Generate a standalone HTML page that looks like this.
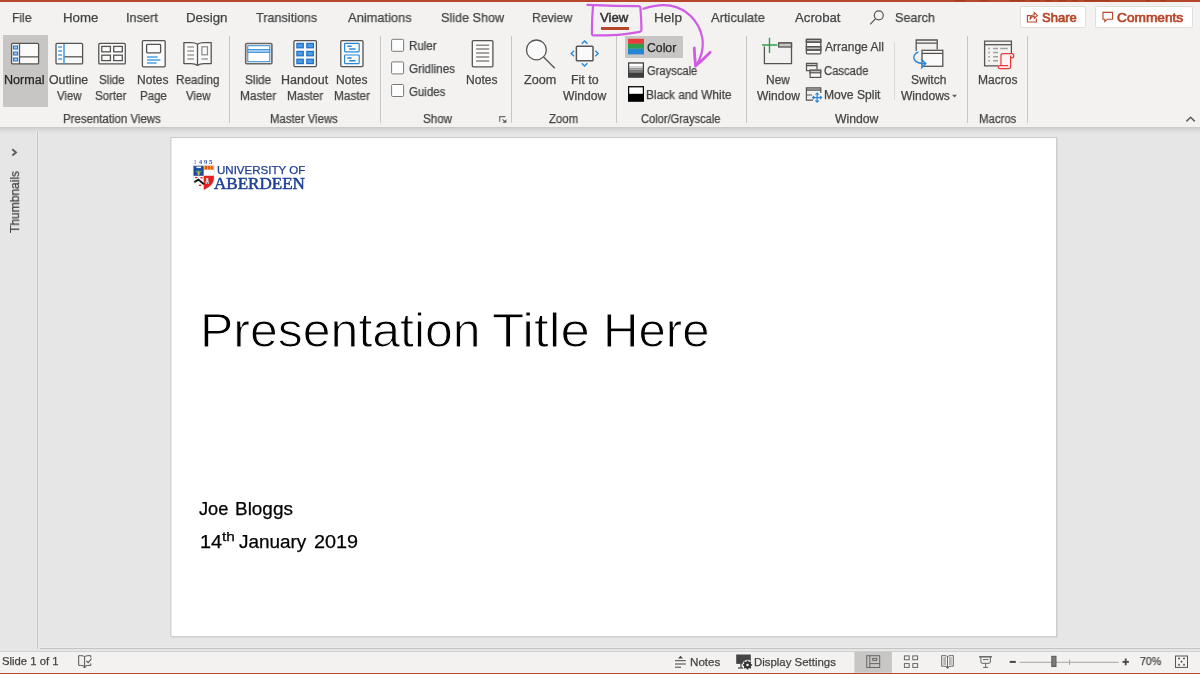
<!DOCTYPE html>
<html lang="en">
<head>
<meta charset="utf-8">
<title>PowerPoint – View tab – Color/Grayscale</title>
<style>
html,body{margin:0;padding:0}
body{width:1200px;height:674px;position:relative;overflow:hidden;background:#e6e6e6;font-family:"Liberation Sans",sans-serif;color:#444}
.t{position:absolute;white-space:nowrap;line-height:1;transform-origin:0 0;color:#444;will-change:transform;-webkit-text-stroke:.25px}
.abs,svg{position:absolute}
svg{overflow:visible}
#titlebar{left:0;top:0;width:1200px;height:2px;background:#b7472a}
#ribbon{left:0;top:2px;width:1200px;height:125px;background:#f3f2f1}
#rshadow{left:0;top:127px;width:1200px;height:8px;background:linear-gradient(#c9c7c5,#d4d3d2 22%,#dedede 50%,#e4e4e4 78%,#e6e6e6)}
.sep{position:absolute;top:36px;width:1px;height:87px;background:#c8c6c4}
.sel{position:absolute;background:#c8c6c4}
.cb{position:absolute;left:391.5px;width:11px;height:11px;border:1px solid #666;background:#fff}
.btn{position:absolute;top:5.5px;height:20.5px;background:#fff;border:1px solid #e1dfdd;border-radius:2px}
#thumbs{left:0;top:130px;width:36px;height:519px;border-right:1px solid #ececec}
#vline{left:37px;top:130px;width:1px;height:519px;background:#c4c4c4;border-right:1px solid #ececec}
#slide{left:0;top:0;width:1200px;height:674px}
#status{left:0;top:651px;width:1200px;height:21.5px;background:#f3f2f1;border-top:1px solid #d2d2d2}
#hline{left:39.5px;top:647px;width:1161px;height:1px;background:#c4c4c4;border-top:1px solid #ececec}
#bottombar{left:0;top:672.5px;width:1200px;height:1.5px;background:#b7472a}
</style>
</head>
<body>
<div id="titlebar" class="abs"><svg width="1200" height="2" style="left:0;top:0"><rect x="955" y="0" width="10" height="1.4" fill="#a23c23"/><rect x="980" y="0" width="8" height="1.4" fill="#a23c23"/><rect x="1010" y="0" width="15" height="1.4" fill="#a23c23"/><rect x="1030" y="0" width="10" height="1.4" fill="#a23c23"/><rect x="1045" y="0" width="7" height="1.4" fill="#a23c23"/><rect x="1058" y="0" width="8" height="1.4" fill="#a23c23"/><rect x="1072" y="0" width="6" height="1.4" fill="#a23c23"/><rect x="1084" y="0" width="26" height="1.4" fill="#a23c23"/><rect x="1146" y="0" width="4" height="1.4" fill="#a23c23"/><rect x="1160" y="0" width="6" height="1.4" fill="#a23c23"/></svg></div>
<div id="ribbon" class="abs"></div>
<div id="rshadow" class="abs"></div>
<span class="t" style="left:11.51px;top:10.99px;font-size:13px;transform:scaleX(0.9325);">File</span>
<span class="t" style="left:62.66px;top:10.99px;font-size:13px;transform:scaleX(1.0217);">Home</span>
<span class="t" style="left:126.33px;top:10.99px;font-size:13px;transform:scaleX(0.9770);">Insert</span>
<span class="t" style="left:186.41px;top:10.99px;font-size:13px;transform:scaleX(1.0245);">Design</span>
<span class="t" style="left:255.97px;top:10.99px;font-size:13px;transform:scaleX(0.9706);">Transitions</span>
<span class="t" style="left:347.97px;top:10.99px;font-size:13px;transform:scaleX(0.9912);">Animations</span>
<span class="t" style="left:441.43px;top:10.99px;font-size:13px;transform:scaleX(0.9693);">Slide Show</span>
<span class="t" style="left:532.24px;top:10.99px;font-size:13px;transform:scaleX(0.9437);">Review</span>
<span class="t" style="left:653.89px;top:10.99px;font-size:13px;transform:scaleX(1.0448);">Help</span>
<span class="t" style="left:711.22px;top:10.99px;font-size:13px;transform:scaleX(0.9937);">Articulate</span>
<span class="t" style="left:794.97px;top:10.99px;font-size:13px;transform:scaleX(1.0161);">Acrobat</span>
<span class="t" style="left:895.43px;top:10.99px;font-size:13px;transform:scaleX(0.9659);">Search</span>
<span class="t" style="left:600.44px;top:10.99px;font-size:13px;transform:scaleX(1.0119);color:#333;-webkit-text-stroke:.5px;">View</span>
<div class="abs" style="left:600.5px;top:27px;width:28.5px;height:3px;background:#b7472a"></div>
<div class="btn" style="left:1019.5px;width:64.5px"></div>
<div class="btn" style="left:1094.5px;width:96.5px"></div>
<span class="t" style="left:1041.91px;top:10.99px;font-size:13px;transform:scaleX(0.9993);color:#b7472a;-webkit-text-stroke:.7px;">Share</span>
<span class="t" style="left:1117.30px;top:10.99px;font-size:13px;transform:scaleX(1.0532);color:#b7472a;-webkit-text-stroke:.7px;">Comments</span>
<div class="sel" style="left:3px;top:35px;width:44.5px;height:72px"></div>
<div class="sel" style="left:625px;top:36px;width:58px;height:22px"></div>
<div class="sep" style="left:229px"></div>
<div class="sep" style="left:379.5px"></div>
<div class="sep" style="left:510.5px"></div>
<div class="sep" style="left:616px"></div>
<div class="sep" style="left:745.5px"></div>
<div class="sep" style="left:967px"></div>
<div class="sep" style="left:1026.5px"></div>
<div class="sep" style="left:894px;top:42px;height:58px;background:#dcdad8"></div>
<span class="t" style="left:4.37px;top:73.84px;font-size:12px;transform:scaleX(1.0465);color:#262626;">Normal</span>
<span class="t" style="left:49.42px;top:73.84px;font-size:12px;transform:scaleX(1.0293);">Outline</span>
<span class="t" style="left:56.55px;top:89.84px;font-size:12px;transform:scaleX(0.9468);">View</span>
<span class="t" style="left:98.88px;top:73.84px;font-size:12px;transform:scaleX(0.9607);">Slide</span>
<span class="t" style="left:95.48px;top:89.84px;font-size:12px;transform:scaleX(0.9582);">Sorter</span>
<span class="t" style="left:137.01px;top:73.84px;font-size:12px;transform:scaleX(1.0023);">Notes</span>
<span class="t" style="left:140.06px;top:89.84px;font-size:12px;transform:scaleX(0.9582);">Page</span>
<span class="t" style="left:175.64px;top:73.84px;font-size:12px;transform:scaleX(0.9734);">Reading</span>
<span class="t" style="left:185.55px;top:89.84px;font-size:12px;transform:scaleX(0.9468);">View</span>
<span class="t" style="left:245.47px;top:73.84px;font-size:12px;transform:scaleX(0.9763);">Slide</span>
<span class="t" style="left:240.43px;top:89.84px;font-size:12px;transform:scaleX(0.9862);">Master</span>
<span class="t" style="left:280.98px;top:73.84px;font-size:12px;transform:scaleX(1.0384);">Handout</span>
<span class="t" style="left:287.03px;top:89.84px;font-size:12px;transform:scaleX(0.9862);">Master</span>
<span class="t" style="left:335.61px;top:73.84px;font-size:12px;transform:scaleX(1.0023);">Notes</span>
<span class="t" style="left:333.63px;top:89.84px;font-size:12px;transform:scaleX(0.9805);">Master</span>
<span class="t" style="left:466.41px;top:73.84px;font-size:12px;transform:scaleX(1.0023);">Notes</span>
<span class="t" style="left:524.00px;top:73.84px;font-size:12px;transform:scaleX(1.0508);">Zoom</span>
<span class="t" style="left:570.98px;top:73.84px;font-size:12px;transform:scaleX(1.0324);">Fit to</span>
<span class="t" style="left:563.35px;top:89.84px;font-size:12px;transform:scaleX(1.0127);">Window</span>
<span class="t" style="left:765.63px;top:73.84px;font-size:12px;transform:scaleX(0.9891);">New</span>
<span class="t" style="left:756.55px;top:89.84px;font-size:12px;transform:scaleX(1.0034);">Window</span>
<span class="t" style="left:911.46px;top:73.84px;font-size:12px;transform:scaleX(0.9994);">Switch</span>
<span class="t" style="left:900.95px;top:89.84px;font-size:12px;transform:scaleX(1.0043);">Windows</span>
<span class="t" style="left:977.61px;top:73.84px;font-size:12px;transform:scaleX(1.0021);">Macros</span>
<span class="t" style="left:62.66px;top:112.84px;font-size:12px;transform:scaleX(0.9536);">Presentation Views</span>
<span class="t" style="left:270.07px;top:112.84px;font-size:12px;transform:scaleX(0.9434);">Master Views</span>
<span class="t" style="left:422.87px;top:112.84px;font-size:12px;transform:scaleX(0.9694);">Show</span>
<span class="t" style="left:549.04px;top:112.84px;font-size:12px;transform:scaleX(0.9491);">Zoom</span>
<span class="t" style="left:641.04px;top:112.84px;font-size:12px;transform:scaleX(0.9236);">Color/Grayscale</span>
<span class="t" style="left:834.55px;top:112.84px;font-size:12px;transform:scaleX(1.0174);">Window</span>
<span class="t" style="left:978.67px;top:112.84px;font-size:12px;transform:scaleX(0.9493);">Macros</span>
<svg id="checkboxes" width="16" height="62" viewBox="390 38 16 62" style="left:390px;top:38px"><rect x="391.6" y="39.3" width="12" height="12" rx="1" fill="#fdfdfd" stroke="#7a7a7a"/><rect x="391.6" y="61.9" width="12" height="12" rx="1" fill="#fdfdfd" stroke="#7a7a7a"/><rect x="391.6" y="84.5" width="12" height="12" rx="1" fill="#fdfdfd" stroke="#7a7a7a"/></svg>
<span class="t" style="left:408.65px;top:40.34px;font-size:12px;transform:scaleX(0.9603);">Ruler</span>
<span class="t" style="left:409.01px;top:62.84px;font-size:12px;transform:scaleX(0.9717);">Gridlines</span>
<span class="t" style="left:409.02px;top:85.84px;font-size:12px;transform:scaleX(0.9572);">Guides</span>
<span class="t" style="left:646.98px;top:41.74px;font-size:12px;transform:scaleX(1.0191);color:#262626;">Color</span>
<span class="t" style="left:646.84px;top:64.84px;font-size:12px;transform:scaleX(0.9304);">Grayscale</span>
<span class="t" style="left:646.43px;top:88.84px;font-size:12px;transform:scaleX(0.9860);">Black and White</span>
<span class="t" style="left:824.58px;top:41.24px;font-size:12px;transform:scaleX(1.0022);">Arrange All</span>
<span class="t" style="left:824.03px;top:64.84px;font-size:12px;transform:scaleX(0.9390);">Cascade</span>
<span class="t" style="left:823.61px;top:88.84px;font-size:12px;transform:scaleX(1.0082);">Move Split</span>
<svg id="ribbon-icons" width="1200" height="132" viewBox="0 0 1200 132" style="left:0;top:0" fill="none" stroke-linecap="butt">
<g id="ico-normal" stroke="#565452">
 <rect x="11.6" y="43.4" width="27" height="20.5" rx="1" fill="#fafafa" stroke-width="1.3"/>
 <path d="M19.5 43.5V64M19.5 56.8H38.5" stroke-width="1.3"/>
 <g stroke="#1e6fc8" fill="#9ccaf0" stroke-width="1"><rect x="13.6" y="46" width="4" height="3"/><rect x="13.6" y="52" width="4" height="3"/><rect x="13.6" y="58" width="4" height="3"/></g>
</g>
<g id="ico-outline" stroke="#565452">
 <rect x="56" y="43.4" width="26.6" height="20.5" rx="1" fill="#fafafa" stroke-width="1.3"/>
 <path d="M64 56.8H82.5" stroke-width="1.3"/>
 <path d="M64 44V63.4" stroke="#4aa3e6" stroke-width="1.6"/>
 <path d="M58.2 47H62M58.2 51H62M58.2 55H62M58.2 59H62" stroke="#4aa3e6" stroke-width="1.5"/>
</g>
<g id="ico-sorter" stroke="#565452" stroke-width="1.3">
 <rect x="98.8" y="43.4" width="26.5" height="20.5" rx="1" fill="#fafafa"/>
 <rect x="101.8" y="46.4" width="8.6" height="5.4"/><rect x="113.7" y="46.4" width="8.6" height="5.4"/>
 <rect x="101.8" y="55.2" width="8.6" height="5.4"/><rect x="113.7" y="55.2" width="8.6" height="5.4"/>
</g>
<g id="ico-notespage" stroke="#565452" stroke-width="1.3">
 <rect x="142.4" y="40.6" width="22.8" height="26.2" rx="1" fill="#fafafa"/>
 <rect x="146.6" y="44.4" width="14" height="8.4" rx="0.8"/>
 <path d="M147 57H157.6M147 60H160.4M147 62.9H156.6" stroke="#4aa3e6" stroke-width="1.5"/>
</g>
<g id="ico-reading" stroke="#565452" stroke-width="1.3">
 <path d="M197.5 44.2C195.5 42.8 193.5 42.6 191 42.6H183.9V63.6H191C193.5 63.6 195.5 63.8 197.5 65.4C199.5 63.8 201.5 63.6 204 63.6H211.2V42.6H204C201.5 42.6 199.5 42.8 197.5 44.2ZM197.5 44.2V65.4" fill="#fafafa" stroke-linejoin="round"/>
 <path d="M187.3 47H194M187.3 51H194M187.3 55H194M187.3 59H194M201.4 59H207.9" stroke="#a19f9d" stroke-width="1.5"/>
 <rect x="201.9" y="46.8" width="5.6" height="8" stroke="#8a8886" stroke-width="1.2"/>
</g>
<g id="ico-slidemaster">
 <rect x="245.7" y="43.5" width="26.2" height="20.3" rx="1" fill="#fafafa" stroke="#6b6560" stroke-width="1.6"/>
 <rect x="247.8" y="45.7" width="22" height="16" fill="#fff" stroke="#2b88d8" stroke-width="1"/>
 <rect x="247.8" y="49.4" width="22" height="3" fill="#9ccaf0" stroke="#2b88d8" stroke-width=".8"/>
</g>
<g id="ico-handoutmaster">
 <rect x="293.9" y="40.6" width="22.5" height="26" rx="1" fill="#fafafa" stroke="#565452" stroke-width="1.3"/>
 <g fill="#4a9be3" stroke="#1e6fc8" stroke-width="1.2">
 <rect x="296.9" y="43.4" width="6.4" height="4.4"/><rect x="306.8" y="43.4" width="6.6" height="4.4"/>
 <rect x="296.9" y="51.4" width="6.4" height="4.4"/><rect x="306.8" y="51.4" width="6.6" height="4.4"/>
 <rect x="296.9" y="59.2" width="6.4" height="4.4"/><rect x="306.8" y="59.2" width="6.6" height="4.4"/></g>
</g>
<g id="ico-notesmaster">
 <rect x="340.8" y="40.6" width="22.2" height="26" rx="1" fill="#fafafa" stroke="#565452" stroke-width="1.3"/>
 <g stroke="#2b88d8" stroke-width="1.2"><rect x="344.6" y="43.4" width="14.6" height="8.4" rx=".8"/><rect x="344.6" y="55" width="14.6" height="8.6" rx=".8"/>
 <path d="M347.3 46.3H351.7M349.2 49H355.6M347.3 58H351.7M349.2 60.8H355.6" stroke-width="1.4"/></g>
</g>
<g id="ico-notes" stroke="#565452" stroke-width="1.3">
 <rect x="472.3" y="40.6" width="20.6" height="26.2" rx="1" fill="#fafafa"/>
 <path d="M476.1 45.2H489.2M476.1 49H489.2M476.1 53H489.2M476.1 57H489.2M476.1 61H489.2" stroke="#8a8886" stroke-width="1.4"/>
</g>
<g id="ico-launcher"><path d="M505.4 116.6H499.7V121.8" stroke="#6a6a6a" stroke-width="1.1"/><path d="M502.4 119.4L505.4 122" stroke="#6a6a6a" stroke-width="1.1"/><path d="M506.4 119.2V122.8H502.4Z" fill="#5a5a5a" stroke="none"/></g>
<g id="ico-zoom" stroke="#565452" stroke-width="1.3">
 <circle cx="536.4" cy="49.9" r="9.9" fill="#fafafa"/><path d="M543.6 57L554.8 68.3"/>
</g>
<g id="ico-fit">
 <rect x="576.4" y="46.3" width="16.6" height="14.4" rx=".8" fill="#fafafa" stroke="#555" stroke-width="1.5"/>
 <path d="M581.8 43.8L584.6 41L587.4 43.8M581.8 63.2L584.6 66L587.4 63.2M574 50.7L571.2 53.5L574 56.3M595.3 50.7L598.1 53.5L595.3 56.3" stroke="#2b88d8" stroke-width="1.4"/>
</g>
<g id="ico-color"><rect x="628" y="38.8" width="16" height="5.1" fill="#e83c3c"/><rect x="628" y="43.8" width="16" height="5" fill="#2f9e4a"/><rect x="628" y="48.7" width="16" height="5.7" fill="#2585d0"/></g>
<g id="ico-gray"><rect x="628" y="62.3" width="16" height="15.5" fill="#3d3d3d"/><rect x="629.2" y="63.6" width="13.6" height="2.4" fill="#fff"/><rect x="629.2" y="66" width="13.6" height="2.2" fill="#d2d2d2"/><rect x="629.2" y="68.2" width="13.6" height="2.3" fill="#a8a8a8"/><rect x="629.2" y="70.5" width="13.6" height="2.3" fill="#7d7d7d"/></g>
<g id="ico-bw"><rect x="628" y="86.1" width="16" height="15.7" fill="#000"/><rect x="629.2" y="87.4" width="13.6" height="6.4" fill="#fff"/></g>
<g id="ico-newwindow" stroke="#565452" stroke-width="1.3">
 <path d="M778.6 43H791.5V63.7H764.4V46.6" fill="none"/><rect x="778.6" y="43" width="12.9" height="4" fill="#c8c6c4"/>
 <path d="M762 45H777.2M769.5 37.7V53" stroke="#2f9e4a" stroke-width="1.4"/>
</g>
<g id="ico-arrange" stroke="#565452" stroke-width="1.3">
 <rect x="806.4" y="39.4" width="14.4" height="14.4" rx=".8" fill="#fafafa"/><rect x="806.4" y="39.4" width="14.4" height="2.8" fill="#c4c2c0"/><rect x="806.4" y="46.7" width="14.4" height="3.3" fill="#c4c2c0"/><path d="M806.4 42.2H820.8M806.4 50H820.8M806.4 46.7H820.8"/>
</g>
<g id="ico-cascade" stroke="#565452" stroke-width="1.2">
 <rect x="806.5" y="63.3" width="10.5" height="2.3" fill="#c4c2c0" stroke="none"/><path d="M809.6 70.6H806.5V63.3H817V69.6M806.5 65.6H817"/><rect x="810.1" y="70.2" width="10.6" height="7.2" fill="#fafafa"/><rect x="810.1" y="70.2" width="10.6" height="2.6" fill="#c4c2c0"/>
</g>
<g id="ico-movesplit" stroke="#565452" stroke-width="1.2">
 <rect x="806.4" y="87.8" width="14.4" height="2.4" fill="#c4c2c0" stroke="none"/><path d="M813 100.2H806.4V87.8H820.8V93"/><path d="M806.4 90.2H820.8M806.4 95H812"/>
 <path d="M812.8 97.6H821.4M817.1 93.3V101.9" stroke="#2b88d8" stroke-width="1.3"/>
 <path d="M814.2 96L812.6 97.6L814.2 99.2M820 96L821.6 97.6L820 99.2M815.5 94.7L817.1 93.1L818.7 94.7M815.5 100.5L817.1 102.1L818.7 100.5" stroke="#2b88d8" stroke-width="1.2"/>
</g>
<g id="ico-switch" stroke="#565452" stroke-width="1.3">
 <path d="M916.2 51V40H937.2V49.5M916.2 43.2H937.2" fill="none"/>
 <rect x="922" y="50.3" width="20.8" height="16" fill="#fafafa"/><path d="M922 53.4H942.8"/>
 <path d="M918.4 52C914.4 53.5 912.6 57 914.6 60C916.4 62.6 920 63.6 925.4 63.6M921.1 58.9L925.8 63.6L921.1 68.4" stroke="#2b88d8" stroke-width="1.4"/>
 <path d="M952 94.8H957L954.5 97.4Z" fill="#605e5c" stroke="none"/>
</g>
<g id="ico-macros" stroke="#565452" stroke-width="1.3">
 <path d="M998 65.8H984.6V41.2H1011.4V53"/><path d="M984.6 44.7H1011.4"/>
 <path d="M988.3 48.6H990M988.3 52.6H990M988.3 56.7H990M988.3 60.8H990M993.2 48.6H998M1000.2 48.6H1007.8M993.2 52.6H998M993.2 56.7H998M993.2 60.8H998" stroke="#a19f9d" stroke-width="1.5"/>
 <path d="M1001 65.6V55.5C1001 54.3 1001.8 53.7 1003 53.7H1011.6C1013.2 53.7 1013.8 54.6 1013.8 55.8C1013.8 57 1013.2 57.8 1012 57.8H1010.6V66.5C1010.6 68 1009.6 68.7 1008.4 68.7H1000C998.6 68.7 998.2 67.8 998.2 67C998.2 66.2 998.8 65.6 999.8 65.6H1008.2M1010.6 57.8V55.6" stroke="#e8383d" stroke-width="1.2" fill="#fdf3f3"/>
</g>
<path id="ico-collapse" d="M1186.4 121.4L1190.6 117.2L1194.8 121.4" stroke="#605e5c" stroke-width="1.5"/>
<g id="ico-search" stroke="#565452" stroke-width="1.2"><circle cx="878.8" cy="15.3" r="4.5"/><path d="M875.6 18.6L870.2 24.4"/></g>
<g id="ico-share" stroke="#b7472a" stroke-width="1.1"><path d="M1030.6 15.6H1027.4V22H1036.4V18.6M1030 19.6C1030.2 16.4 1032 14.8 1034.2 14.8V12.4L1037.4 15.4L1034.2 18.4V16.2C1032.4 16.2 1031 17.2 1030 19.6Z"/></g>
<path id="ico-comment" d="M1103 12.4H1112.6V19.2H1107.4L1104.8 21.6V19.2H1103Z" stroke="#b7472a" stroke-width="1.1"/>
<g id="annotation" stroke="#cf5de3" stroke-width="2.2" stroke-linecap="round" stroke-linejoin="round">
 <path d="M587.4 4.9C600 5.4 620 6.2 638.6 6.1C640 6.1 640.3 6.6 640.4 8C640.9 15 641.6 24 641.4 30C641.4 31.2 640.8 31.6 639.6 31.8C630 33.6 622 34.8 612 35.2C605 35.5 599 35.5 593.4 35.3C592.2 35.3 591.9 34.8 591.9 33.6C591.9 25 592.2 15 593 6"/>
 <path d="M643.4 8.8C650 6.6 657 5.2 663.5 5.2C668 5.2 672.4 5.8 676.8 7.4C684 10 690 14.6 694.2 20C698.4 25.4 701 31.4 702.2 37.4C703.2 42.6 702.8 48 701.6 53.4C700.4 58 698.4 62.4 695.6 66"/>
 <path d="M694.3 48C694.5 54 694.9 60 695.6 66C700.6 61.6 705.6 57 710.2 52.2" stroke-width="2.8"/>
</g>
</svg>

<div id="thumbs" class="abs"></div>
<div id="vline" class="abs"></div>
<svg width="8" height="9" viewBox="11 148 8 9" style="left:11px;top:148px" fill="none"><path d="M12.3 149.3L16 152.4L12.3 155.5" stroke="#606060" stroke-width="2"/></svg>
<span class="t" style="left:8.72px;top:232.87px;font-size:12.5px;transform:rotate(-90deg) scaleX(0.9612);">Thumbnails</span>
<div id="slide" class="abs"><svg width="1200" height="674" style="left:0;top:0"><rect x="171.9" y="138.6" width="886" height="499.4" fill="#dbdbdb"/><rect x="170.9" y="137.6" width="885.7" height="499.1" fill="#fff" stroke="#c8c8c8" stroke-width="1"/></svg></div>
<div id="hline" class="abs"></div>
<div id="status" class="abs"></div>
<div id="bottombar" class="abs"></div>
<svg id="status-icons" width="1200" height="30" viewBox="0 644 1200 30" style="left:0;top:644px" fill="none">
<g id="ico-spell" stroke="#555" stroke-width="1"><path d="M84.6 656.6C83 655.6 81 655.6 78.7 655.7V665.4C81 665.3 83 665.4 84.6 666.4V656.6C86.2 655.6 88.4 655.6 90.8 655.7V657.6M84.6 666.4C86.2 665.4 88.4 665.3 90.8 665.4V663.4M84.6 666V667.9M83.2 666.6L84.6 668L86 666.6"/><path d="M86.4 660.8L88.2 662.7L91.6 658.5" stroke-width="1.1"/></g>
<g id="ico-notes-s" stroke="#444" stroke-width="1"><path d="M675 660.7H685.8M675 664H685.8M675 667.2H681"/><path d="M680.5 655.8L683 658.4H678Z" fill="#444" stroke="none"/></g>
<g id="ico-display"><rect x="736.2" y="654.5" width="14.6" height="9.4" fill="#444"/><path d="M738 668H743.4" stroke="#444" stroke-width="1.2"/><path d="M741 664V668" stroke="#444" stroke-width="1.2"/>
 <circle cx="747.5" cy="665" r="5.2" fill="#f3f2f1"/><circle cx="747.5" cy="665" r="2.6" stroke="#333" stroke-width="2"/>
 <path d="M747.5 660.4V669.6M742.9 665H752.1M744.2 661.7L750.8 668.3M750.8 661.7L744.2 668.3" stroke="#333" stroke-width="1.5"/><circle cx="747.5" cy="665" r="1.3" fill="#f3f2f1"/></g>
<rect x="854.4" y="651.7" width="37.5" height="21" fill="#c8c6c4"/>
<g id="ico-normal-s" stroke="#666" stroke-width="1"><rect x="866.7" y="655.7" width="13" height="11.8"/><path d="M869.8 655.7V667.5M869.8 663.6H879.7"/><rect x="872.7" y="658.4" width="4" height="2" /></g>
<g id="ico-sorter-s" stroke="#666" stroke-width="1"><rect x="904.4" y="655.9" width="4.8" height="3.8"/><rect x="912.8" y="655.9" width="4.8" height="3.8"/><rect x="904.4" y="663.6" width="4.8" height="3.8"/><rect x="912.8" y="663.6" width="4.8" height="3.8"/></g>
<g id="ico-reading-s" stroke="#666" stroke-width="1"><path d="M947.5 656.6C946 655.5 944 655.5 941.7 655.6V666.2C944 666.1 946 666.2 947.5 667.2C949 666.2 951 666.1 953.3 666.2V655.6C951 655.5 949 655.5 947.5 656.6ZM947.5 656.6V668.4"/><path d="M943.3 658H946M943.3 660H946M943.3 662H946M943.3 664H946M949 658H951.7M949 660H951.7M949 662H951.7M949 664H951.7" stroke="#777" stroke-width="1"/><path d="M946.2 667L947.5 668.4L948.8 667"/></g>
<g id="ico-show-s" stroke="#666" stroke-width="1"><path d="M979.1 656.8H991.9" stroke-width="1.5"/><path d="M980.9 657V662.2C980.9 662.8 981.4 663.3 982 663.3H989.2C989.8 663.3 990.3 662.8 990.3 662.2V657"/><path d="M983 659.6H988.4M985.6 663.3V667.4M983.1 667.4H988.1"/></g>
<g id="zoomctl"><path d="M1009.7 661.9H1015.8" stroke="#444" stroke-width="2"/><path d="M1019.7 662.3H1118.7" stroke="#a6a6a6" stroke-width="1"/><path d="M1069.5 659.7V665" stroke="#a6a6a6" stroke-width="1"/>
 <rect x="1051.8" y="656.3" width="4.2" height="10.2" fill="#7a7a7a" stroke="#5a5a5a" stroke-width="1"/>
 <path d="M1122.5 661.9H1128.9M1125.7 658.6V665.3" stroke="#444" stroke-width="1.8"/></g>
<g id="ico-fit-s" stroke="#555" stroke-width="1"><rect x="1175.5" y="656" width="12" height="11.4"/><path d="M1178 658.5H1180M1179 657.5V659.5M1183 658.5H1185M1184 657.5V659.5M1178 664.8H1180M1179 663.8V665.8M1183 664.8H1185M1184 663.8V665.8M1180.4 661.7H1182.6M1181.5 660.6V662.8" stroke-width=".9"/></g>
</svg>

<span class="t" style="left:1.99px;top:656.49px;font-size:11px;transform:scaleX(1.0278);">Slide 1 of 1</span>
<span class="t" style="left:690.05px;top:656.69px;font-size:11px;transform:scaleX(1.0570);">Notes</span>
<span class="t" style="left:753.56px;top:656.69px;font-size:11px;transform:scaleX(1.0378);">Display Settings</span>
<span class="t" style="left:1139.96px;top:656.19px;font-size:11px;transform:scaleX(0.9639);">70%</span>
<svg id="crest" width="24" height="28" viewBox="192 164 24 28" style="left:192px;top:164px">
<defs><clipPath id="shieldclip"><path d="M193.3 165.7H214.1V178.6C214.1 183.6 209.6 187.6 203.7 190.1C197.8 187.6 193.3 183.6 193.3 178.6Z"/></clipPath></defs>
<g clip-path="url(#shieldclip)">
 <rect x="193" y="165" width="22" height="26" fill="#fff"/>
 <rect x="192.5" y="165" width="11.2" height="10.8" fill="#1c4aa0"/>
 <rect x="196.4" y="166.6" width="4.6" height="1.5" fill="#f4f4f4"/>
 <rect x="195.8" y="170.4" width="6" height="2" rx="1" fill="#3f9a62"/>
 <rect x="197.6" y="171.4" width="2" height="4" rx=".8" fill="#e7b24a"/>
 <rect x="203.7" y="165" width="11" height="4.5" fill="#e3262a"/>
 <path d="M204.6 165V169.5M207.6 165V169.5M210.5 165V169.5M213.3 165V169.5" stroke="#f6b50d" stroke-width="1.5"/>
 <path d="M203.7 175.8H214.1V191H203.7Z" fill="#e3221f"/>
 <path d="M205.6 184V181.6L206.1 180.4V177.9H208.3V180.4L208.8 181.6V184Z" fill="#cfd3d6"/><rect x="206.8" y="182.4" width=".9" height="1.6" fill="#444"/>
 <path d="M192.4 183.2L198.4 179.6L204 184.2" stroke="#111" stroke-width="2" fill="none"/>
 <rect x="195" y="176.9" width="2.4" height="1.3" fill="#e3262a"/><rect x="200.4" y="177.2" width="2.4" height="1.3" fill="#e3262a"/><rect x="198.8" y="184.6" width="2.4" height="1.4" fill="#e3262a"/>
</g>
<path d="M193.3 165.7H214.1V178.6C214.1 183.6 209.6 187.6 203.7 190.1C197.8 187.6 193.3 183.6 193.3 178.6Z" fill="none" stroke="#c9ccd4" stroke-width=".5"/>
</svg>

<span class="t" style="left:194.35px;top:159.84px;font-size:5.8px;transform:scaleX(0.7493);font-family:'Liberation Serif',serif;font-weight:700;-webkit-text-stroke:0;color:#2f4fa2;">1</span>
<span class="t" style="left:199.32px;top:159.84px;font-size:5.8px;transform:scaleX(1.0689);font-family:'Liberation Serif',serif;font-weight:700;-webkit-text-stroke:0;color:#2f4fa2;">4</span>
<span class="t" style="left:204.22px;top:159.84px;font-size:5.8px;transform:scaleX(1.1454);font-family:'Liberation Serif',serif;font-weight:700;-webkit-text-stroke:0;color:#2f4fa2;">9</span>
<span class="t" style="left:209.33px;top:159.84px;font-size:5.8px;transform:scaleX(1.1811);font-family:'Liberation Serif',serif;font-weight:700;-webkit-text-stroke:0;color:#2f4fa2;">5</span>
<span class="t" style="left:217.01px;top:164.80px;font-size:10.75px;transform:scaleX(1.0732);color:#1f3f95;">UNIVERSITY OF</span>
<span class="t" style="left:214.43px;top:176.47px;font-size:16.4px;transform:scaleX(1.0400);font-family:'Liberation Serif',serif;color:#1f3f95;-webkit-text-stroke:.5px #1f3f95;">ABERDEEN</span>
<span class="t" style="left:200.00px;top:305.61px;font-size:49px;transform:scaleX(1.0201);color:#000;-webkit-text-stroke:1px #fff;">Presentation</span>
<span class="t" style="left:492.41px;top:305.61px;font-size:49px;transform:scaleX(1.0780);color:#000;-webkit-text-stroke:1px #fff;">Title</span>
<span class="t" style="left:603.07px;top:305.61px;font-size:49px;transform:scaleX(1.0029);color:#000;-webkit-text-stroke:1px #fff;">Here</span>
<span class="t" style="left:199.42px;top:499.59px;font-size:18.2px;transform:scaleX(1.0017);color:#000;">Joe</span>
<span class="t" style="left:234.75px;top:499.59px;font-size:18.2px;transform:scaleX(1.0412);color:#000;">Bloggs</span>
<span class="t" style="left:199.69px;top:533.39px;font-size:18.2px;transform:scaleX(1.0914);color:#000;">14</span>
<span class="t" style="left:222.17px;top:531.33px;font-size:12.6px;transform:scaleX(1.2212);color:#000;">th</span>
<span class="t" style="left:239.40px;top:533.39px;font-size:18.2px;transform:scaleX(1.0399);color:#000;">January</span>
<span class="t" style="left:314.30px;top:533.39px;font-size:18.2px;transform:scaleX(1.0901);color:#000;">2019</span>
</body>
</html>
